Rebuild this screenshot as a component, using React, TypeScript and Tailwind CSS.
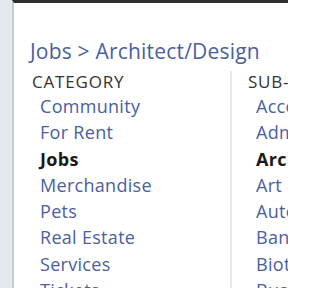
const categories = [
  { name: 'Community' },
  { name: 'For Rent' },
  { name: 'Jobs', active: true },
  { name: 'Merchandise' },
  { name: 'Pets' },
  { name: 'Real Estate' },
  { name: 'Services' },
  { name: 'Tickets' },
];

const subCategories = [
  { name: 'Accounting' },
  { name: 'Admin/Office' },
  { name: 'Architect/Design', active: true },
  { name: 'Art & Media' },
  { name: 'Automotive' },
  { name: 'Banking' },
  { name: 'Biotech' },
  { name: 'Business' },
];

function LinkList({ items }: { items: { name: string; active?: boolean }[] }) {
  return (
    <ul className="pl-2">
      {items.map((item) => (
        <li
          key={item.name}
          className={`h-[26.3px] whitespace-nowrap text-[18px] leading-[26.3px] tracking-[0.3px] ${
            item.active ? 'font-bold text-[#1a1a1a]' : 'text-[#4a60a1]'
          }`}
        >
          {item.name}
        </li>
      ))}
    </ul>
  );
}

export default function App() {
  return (
    <div
      className="flex h-[288px] w-[288px] overflow-hidden bg-[#e3e9ef]"
      style={{ fontFamily: '"Open Sans", sans-serif' }}
    >
      <div className="w-[12px] shrink-0" />
      <div className="flex w-[276px] shrink-0 flex-col overflow-hidden border-l-2 border-[#c7cbcf] border-t-[3px] border-t-[#2e2e2e] bg-white">
        <div className="ml-[7px] mt-[20px] h-[2px] bg-[#e2e2e2]" />
        <div className="pl-[16px] pt-[15px]">
          <h1 className="whitespace-nowrap text-[21px] leading-[26px] tracking-[0.2px] text-[#4a60a1]">
            Jobs &gt; Architect/Design
          </h1>
          <div className="mt-[7px] flex">
            <div className="w-[200px] shrink-0 pl-[2px]">
              <div className="text-[17px] leading-[22px] tracking-[0.8px] text-[#333333]">CATEGORY</div>
              <LinkList items={categories} />
            </div>
            <div className="w-[60px] shrink-0 overflow-hidden border-l-2 border-[#e8e8e8] pl-[16px]">
              <div className="whitespace-nowrap text-[17px] leading-[22px] tracking-[0.8px] text-[#333333]">SUB-CATEGORY</div>
              <LinkList items={subCategories} />
            </div>
          </div>
        </div>
      </div>
    </div>
  );
}
